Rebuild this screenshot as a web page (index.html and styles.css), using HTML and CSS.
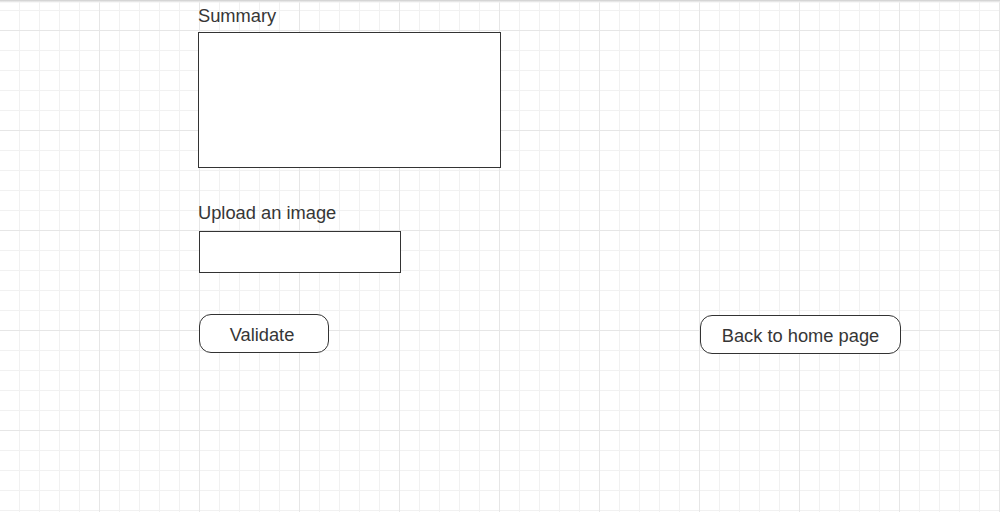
FILE: index.html
```html
<!DOCTYPE html>
<html lang="en">
<head>
<meta charset="utf-8">
<title>Form</title>
<link rel="stylesheet" href="styles.css">
</head>
<body>
<div class="canvas">
  <div class="form">
    <div class="label label-summary">Summary</div>
    <div class="textarea"></div>
    <div class="label label-upload">Upload an image</div>
    <div class="upload-box"></div>
    <div class="actions">
      <div class="btn btn-validate">Validate</div>
      <div class="btn btn-back">Back to home page</div>
    </div>
  </div>
</div>
</body>
</html>
```
FILE: styles.css
```css
html, body {
  margin: 0;
  padding: 0;
}
body {
  width: 1000px;
  height: 512px;
  overflow: hidden;
  font-family: "Liberation Sans", Arial, Helvetica, sans-serif;
  color: #363636;
  background-color: #ffffff;
  background-image:
    linear-gradient(to bottom, #cccccc 0px, #dedede 1px, #efefef 2px, rgba(255,255,255,0) 3px),
    linear-gradient(to right, transparent 99px, #e6e6e6 99px, #e6e6e6 100px, transparent 100px),
    linear-gradient(to bottom, transparent 30px, #e6e6e6 30px, #e6e6e6 31px, transparent 31px),
    linear-gradient(to right, transparent 19px, #f1f1f1 19px, #f1f1f1 20px, transparent 20px),
    linear-gradient(to bottom, transparent 10px, #f1f1f1 10px, #f1f1f1 11px, transparent 11px);
  background-size:
    100% 3px,
    100px 100px,
    100px 100px,
    20px 20px,
    20px 20px;
  background-repeat: no-repeat, repeat, repeat, repeat, repeat;
}
.canvas {
  padding-left: 198px;
  padding-top: 6px;
}
.form {
  display: flex;
  flex-direction: column;
  align-items: flex-start;
}
.label {
  font-size: 18.3px;
  line-height: 20px;
  height: 20px;
  white-space: nowrap;
}
.textarea {
  margin-top: 6px;
  width: 301px;
  height: 134px;
  border: 1px solid #333333;
  background: #ffffff;
}
.label-upload {
  margin-top: 35px;
}
.upload-box {
  margin-top: 8px;
  margin-left: 1px;
  width: 200px;
  height: 40px;
  border: 1px solid #333333;
  background: #ffffff;
}
.actions {
  margin-top: 41px;
  margin-left: 1px;
  display: flex;
  align-items: flex-start;
  gap: 371px;
}
.btn {
  box-sizing: border-box;
  height: 39px;
  border: 1px solid #333333;
  border-radius: 12px;
  background: #ffffff;
  font-size: 18.3px;
  line-height: 37px;
  text-align: center;
  white-space: nowrap;
  overflow: hidden;
}
.btn-validate {
  width: 130px;
  padding-right: 4px;
  padding-top: 1px;
}
.btn-back {
  width: 201px;
  margin-top: 1px;
  padding-top: 1px;
}
```
